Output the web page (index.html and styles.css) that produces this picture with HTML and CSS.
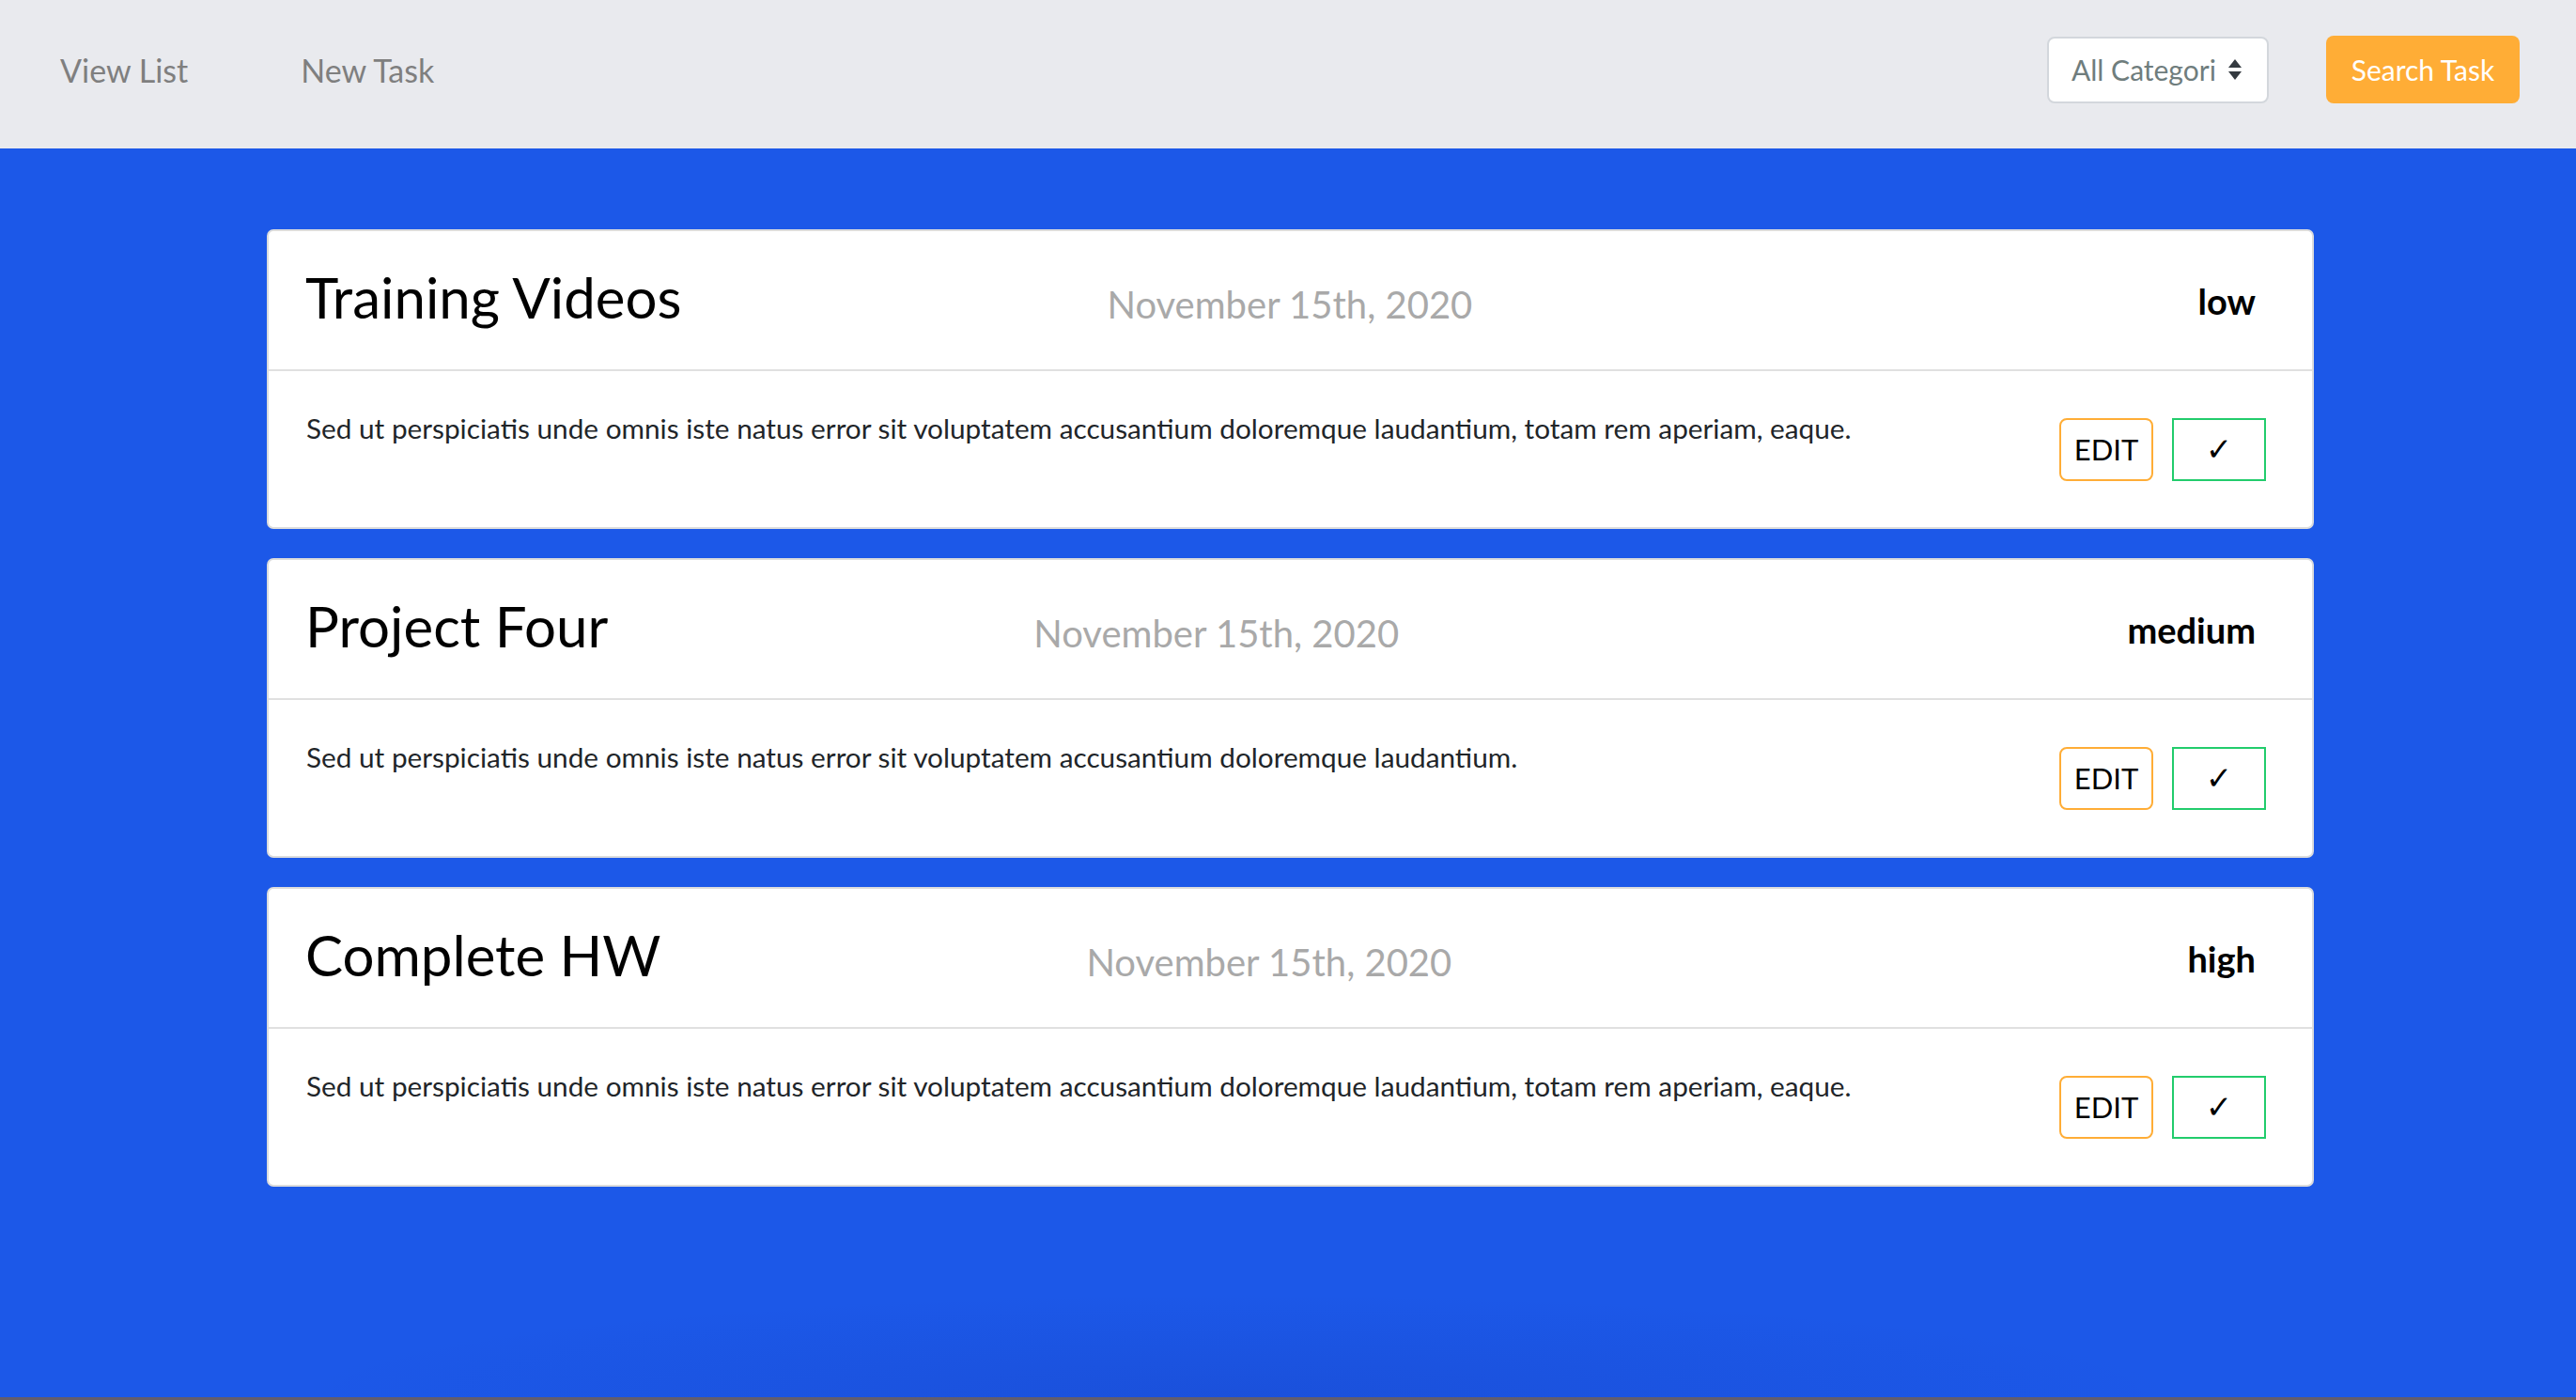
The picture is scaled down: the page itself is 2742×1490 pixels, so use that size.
FILE: index.html
```html
<!DOCTYPE html>
<html lang="en">
<head>
<meta charset="utf-8">
<title>Tasks</title>
<link rel="stylesheet" href="styles.css">
</head>
<body>
<header class="topbar">
  <nav class="nav">
    <a class="nav-link" href="#">View List</a>
    <a class="nav-link" href="#">New Task</a>
  </nav>
  <div class="tools">
    <div class="select">
      <span class="select-text">All Categori</span>
      <svg class="select-arrows" width="16" height="26" viewBox="0 0 16 26"><path d="M8 2 L15 11 H1 Z" fill="#343a40"/><path d="M8 24 L15 15 H1 Z" fill="#343a40"/></svg>
    </div>
    <button class="search-btn">Search Task</button>
  </div>
</header>
<main class="main">
  <section class="card">
    <div class="card-head">
      <h2 class="title">Training Videos</h2>
      <span class="date">November 15th, 2020</span>
      <span class="priority">low</span>
    </div>
    <div class="card-body">
      <p class="desc">Sed ut perspiciatis unde omnis iste natus error sit voluptatem accusantium doloremque laudantium, totam rem aperiam, eaque.</p>
      <div class="actions">
        <button class="btn-edit">EDIT</button>
        <button class="btn-done">✓</button>
      </div>
    </div>
  </section>
  <section class="card">
    <div class="card-head">
      <h2 class="title">Project Four</h2>
      <span class="date">November 15th, 2020</span>
      <span class="priority">medium</span>
    </div>
    <div class="card-body">
      <p class="desc">Sed ut perspiciatis unde omnis iste natus error sit voluptatem accusantium doloremque laudantium.</p>
      <div class="actions">
        <button class="btn-edit">EDIT</button>
        <button class="btn-done">✓</button>
      </div>
    </div>
  </section>
  <section class="card">
    <div class="card-head">
      <h2 class="title">Complete HW</h2>
      <span class="date">November 15th, 2020</span>
      <span class="priority">high</span>
    </div>
    <div class="card-body">
      <p class="desc">Sed ut perspiciatis unde omnis iste natus error sit voluptatem accusantium doloremque laudantium, totam rem aperiam, eaque.</p>
      <div class="actions">
        <button class="btn-edit">EDIT</button>
        <button class="btn-done">✓</button>
      </div>
    </div>
  </section>
</main>
</body>
</html>
```
FILE: styles.css
```css
* { box-sizing: border-box; }
html, body { margin: 0; padding: 0; height: 100%; }
body {
  font-family: Lato, "Open Sans", "Liberation Sans", sans-serif;
  background: #1c58e8;
  display: flex;
  flex-direction: column;
  height: 1490px;
  overflow: hidden;
}
.topbar {
  height: 158px;
  background: #e9eaee;
  display: flex;
  align-items: center;
  justify-content: space-between;
  padding: 0 60px 10px 64px;
  flex-shrink: 0;
}
.nav { display: flex; gap: 120px; align-items: center; }
.nav-link {
  color: #7f7f7f;
  text-decoration: none;
  font-size: 34px;
}
.tools { display: flex; align-items: center; gap: 61px; }
.select {
  width: 236px;
  height: 71px;
  background: #fff;
  border: 2px solid #d3d7dc;
  border-radius: 8px;
  display: flex;
  align-items: center;
  padding: 0 0 0 24px;
  gap: 12px;
}
.select-text { color: #6f7d7d; font-size: 30px; }
.search-btn {
  width: 206px;
  height: 72px;
  background: #ffad36;
  border: none;
  border-radius: 8px;
  color: #fff;
  font-family: inherit;
  font-size: 30px;
}
.main {
  flex: 1;
  padding: 86px 0 0 284px;
  display: flex;
  flex-direction: column;
  gap: 31px;
  background:
    radial-gradient(ellipse 1000px 110px at 48% 100%, rgba(18, 40, 150, 0.16), rgba(18, 40, 150, 0) 100%),
    #1c58e8;
  border-bottom: 3px solid #635d6c;
}
.card {
  width: 2179px;
  height: 319px;
  flex-shrink: 0;
  background: #fff;
  border: 2px solid #dcdcdc;
  border-radius: 7px;
  display: flex;
  flex-direction: column;
}
.card-head {
  height: 149px;
  border-bottom: 2px solid #e0e0e0;
  display: flex;
  align-items: baseline;
  padding: 34px 60px 0 39px;
}
.title {
  margin: 0;
  font-weight: 400;
  font-size: 60px;
  line-height: 1.2;
  color: #000;
}
.date {
  margin-left: 453px;
  font-size: 40px;
  line-height: 1.2;
  color: #a9a9a9;
}
.priority {
  margin-left: auto;
  align-self: flex-start;
  margin-top: 18px;
  font-size: 38px;
  line-height: 1.2;
  font-weight: 700;
  color: #000;
}
.card-body {
  flex: 1;
  display: flex;
  align-items: center;
  padding: 0 49px 0 40px;
}
.desc {
  flex: 1;
  align-self: flex-start;
  margin: 0;
  padding-top: 39px;
  font-size: 29.75px;
  line-height: 1.5;
  color: #212529;
}
.actions { display: flex; gap: 20px; }
.btn-edit, .btn-done {
  width: 100px;
  height: 67px;
  background: #fff;
  font-family: Lato, "Open Sans", sans-serif;
  color: #000;
  font-size: 31px;
  padding: 0;
}
.btn-edit { border: 2px solid #ffad36; border-radius: 8px; }
.btn-done { border: 2px solid #22cc6c; border-radius: 0; font-family: "DejaVu Sans", sans-serif; font-size: 34px; }
```
